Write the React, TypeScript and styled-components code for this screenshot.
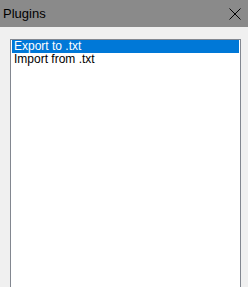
import styled, { createGlobalStyle } from "styled-components";

const Global = createGlobalStyle`
  html, body {
    margin: 0;
    padding: 0;
    overflow: hidden;
    background: #f0f0f0;
  }
`
const Window = styled.div`
  width: 248px;
  height: 287px;
  display: flex;
  flex-direction: column;
  background: #f0f0f0;
  font-family: "Liberation Sans", Arial, sans-serif;
  overflow: hidden;
`
const TitleBar = styled.div`
  height: 27px;
  flex-shrink: 0;
  display: flex;
  align-items: center;
  justify-content: space-between;
  padding: 0 5px 0 3px;
  background: #8a8a8a;
  color: #000;
  font-size: 13px;
`
const Close = styled.button`
  width: 16px;
  height: 16px;
  padding: 0;
  display: flex;
  align-items: center;
  justify-content: center;
  background: transparent;
  border: none;
`
const Body = styled.div`
  flex: 1;
  padding: 12px 7px 0 10px;
  display: flex;
`
const ListBox = styled.ul`
  flex: 1;
  margin: 0;
  padding: 0 1px;
  list-style: none;
  background: #fff;
  border: 1px solid #828790;
  border-bottom: none;
`
const Item = styled.li<{ $select?: boolean }>`
  height: 13px;
  line-height: 13px;
  padding-left: 2px;
  font-size: 12px;
  white-space: nowrap;
  background: ${p => p.$select ? "#0078d7" : "transparent"};
  color: ${p => p.$select ? "#fff" : "#000"};
`

const items = ["Export to .txt", "Import from .txt"];

export default function App() {
  return (
    <Window>
      <Global />
      <TitleBar>
        <span>Plugins</span>
        <Close>
          <svg width="12" height="12" viewBox="0 0 12 12">
            <path d="M0.5 0.5 L11.5 11.5 M11.5 0.5 L0.5 11.5" stroke="#000" strokeWidth="1" />
          </svg>
        </Close>
      </TitleBar>
      <Body>
        <ListBox>
          {items.map((item, i) => (
            <Item key={item} $select={i === 0}>{item}</Item>
          ))}
        </ListBox>
      </Body>
    </Window>
  );
}
